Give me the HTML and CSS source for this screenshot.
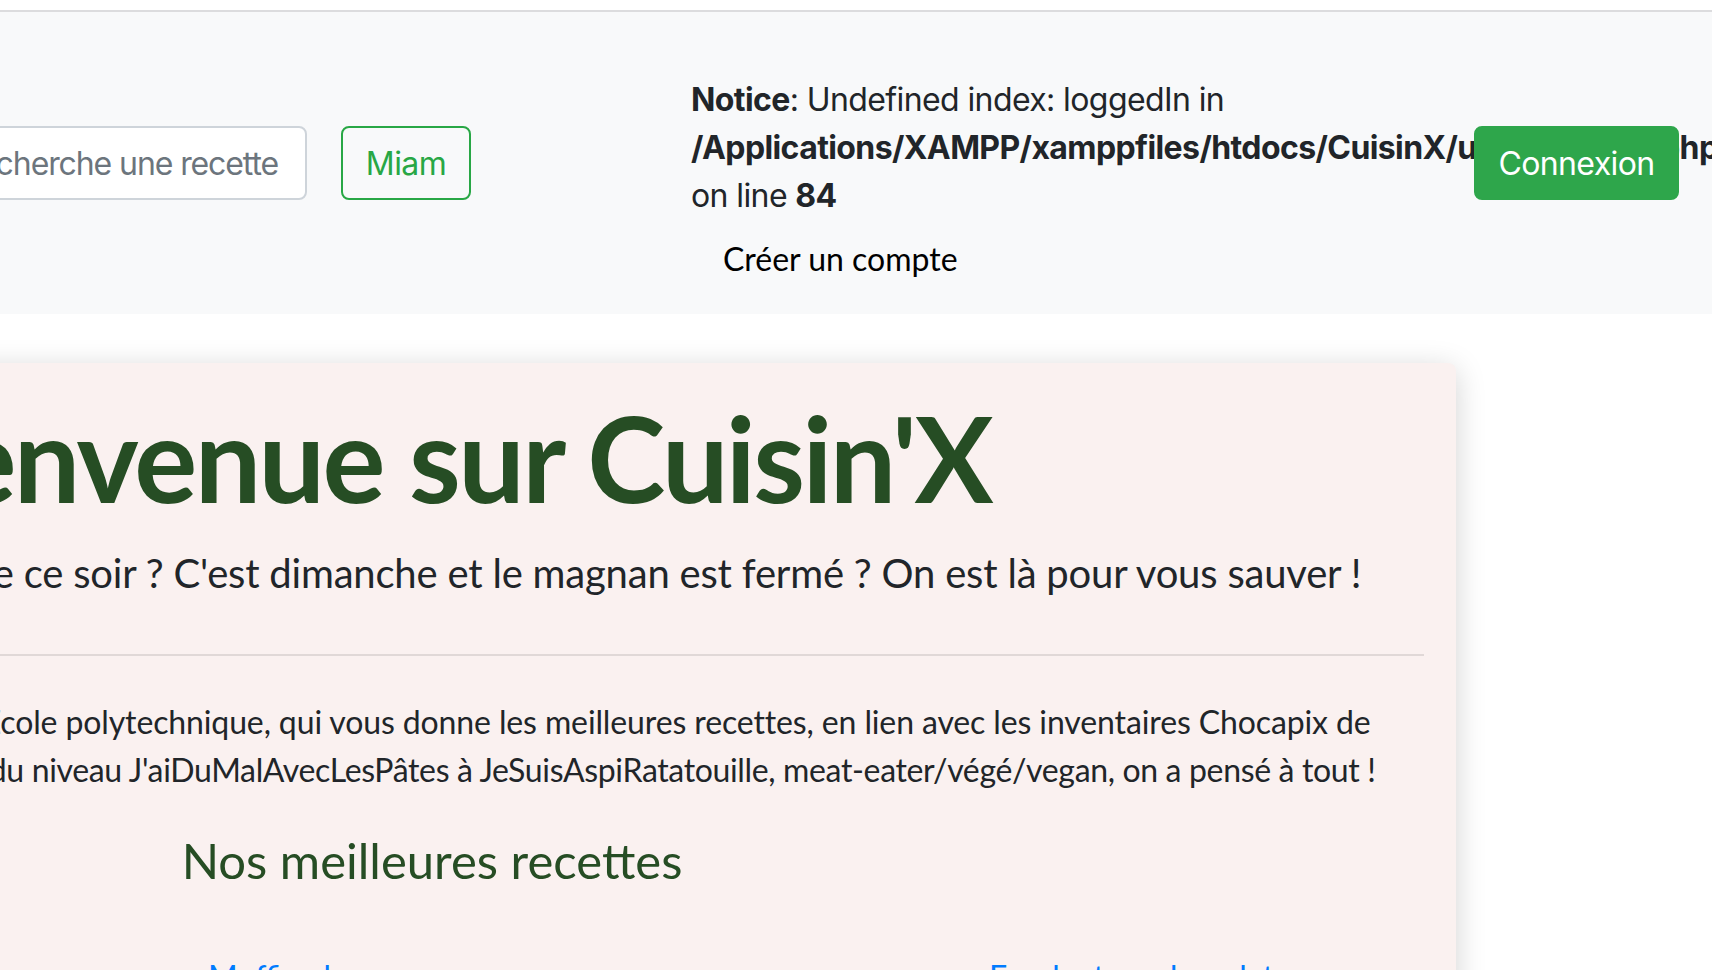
FILE: index.html
```html
<!DOCTYPE html>
<html lang="fr">
<head>
<meta charset="utf-8">
<title>Cuisin'X</title>
<link rel="stylesheet" href="styles.css">
</head>
<body>
<div class="top-gap"></div>
<nav class="navbar">
  <form class="search">
    <input class="search-input" type="text" placeholder="Je cherche une recette">
    <button class="btn-miam" type="button">Miam</button>
  </form>
  <div class="nav-middle">
    <div class="notice"><b>Notice</b>: Undefined index: loggedIn in <b>/Applications/XAMPP/xamppfiles/htdocs/CuisinX/utils/session.php</b> on line <b>84</b></div>
    <a class="nav-link" href="#">Créer un compte</a>
  </div>
  <button class="btn-connexion" type="button">Connexion</button>
</nav>

<main class="jumbotron">
  <h1 class="display">Bienvenue sur Cuisin'X</h1>
  <p class="lead">Qu'est-ce qu'on mange ce soir ? C'est dimanche et le magnan est fermé ? On est là pour vous sauver !</p>
  <hr class="divider">
  <p class="intro"><span class="intro-l1">Cuisin'X est le site de cuisine de l'École polytechnique, qui vous donne les meilleures recettes, en lien avec les inventaires Chocapix de</span><br><span class="intro-l2">l'X. Des recettes de tous les goûts, du niveau J'aiDuMalAvecLesPâtes à JeSuisAspiRatatouille, meat-eater/végé/vegan, on a pensé à tout !</span></p>
  <h2 class="best">Nos meilleures recettes</h2>
  <div class="recipes">
    <a class="recipe" href="#">Crêpes de la Kès</a>
    <a class="recipe" href="#">Muffins banane</a>
    <a class="recipe" href="#">Fondant au chocolat</a>
  </div>
</main>
</body>
</html>
```
FILE: styles.css
```css
html, body {
  margin: 0;
  padding: 0;
  overflow: hidden;
  background: #ffffff;
}
body {
  font-family: "Inter", "Roboto", "Liberation Sans", sans-serif;
  color: #212529;
  font-size: 32px;
  line-height: 48px;
}
.top-gap {
  height: 10px;
  border-bottom: 2px solid #dcdcde;
  background: #ffffff;
}
.navbar {
  display: flex;
  align-items: center;
  background: #f8f9fa;
  padding: 0 33px 0 0;
  letter-spacing: -0.6px;
}
.search {
  display: flex;
  align-items: center;
  margin-left: -73px;
}
.search-input {
  box-sizing: border-box;
  width: 380px;
  height: 74px;
  border: 2px solid #ced4da;
  border-radius: 8px;
  background: #fff;
  padding: 0 10px 0 24px;
  font-family: inherit;
  font-size: 32px;
  letter-spacing: -1.1px;
  color: #495057;
  outline: none;
}
.search-input::placeholder {
  color: #6c757d;
  opacity: 1;
}
.btn-miam {
  box-sizing: border-box;
  margin-left: 34px;
  width: 130px;
  height: 74px;
  border: 2px solid #28a745;
  border-radius: 8px;
  background: transparent;
  color: #28a745;
  font-family: inherit;
  font-size: 32px;
  letter-spacing: -0.6px;
  padding: 0;
}
.nav-middle {
  margin: 64px 0 15px 220px;
  width: 600px;
}
.notice b { font-weight: 700; }
.nav-link {
  display: block;
  padding: 15px 0 16px 32px;
  font-family: "Lato", "Open Sans", sans-serif;
  letter-spacing: 0;
  color: #000;
  text-decoration: none;
}
.btn-connexion {
  box-sizing: border-box;
  margin-left: auto;
  width: 205px;
  height: 74px;
  border: 2px solid #2ea64b;
  border-radius: 8px;
  background: #2ea64b;
  color: #fff;
  font-family: inherit;
  font-size: 32px;
  letter-spacing: -0.6px;
  padding: 0;
}
.jumbotron {
  box-sizing: border-box;
  margin: 49px 0 0 -566px;
  width: 2022px;
  padding: 24px 32px 0;
  background: #faf1f0;
  border-radius: 8px;
  box-shadow: 0 6px 30px rgba(0, 0, 0, 0.18);
  text-align: center;
  font-family: "Lato", "Open Sans", sans-serif;
  height: 700px;
}
.display {
  margin: 0 0 0 -47px;
  font-size: 118px;
  line-height: 1.2;
  font-weight: 700;
  letter-spacing: -2.6px;
  color: #264d24;
}
.lead {
  margin: 15px 0 0 86px;
  font-size: 40px;
  line-height: 58px;
  letter-spacing: -0.2px;
}
.divider {
  margin: 52px 0 0;
  border: 0;
  border-top: 2px solid rgba(0, 0, 0, 0.1);
}
.intro {
  margin: 42px 0 0;
  font-size: 32px;
  line-height: 48px;
}
.intro-l1 {
  letter-spacing: -0.12px;
}
.intro-l2 {
  letter-spacing: -0.35px;
}
.best {
  margin: 36px 26px 0 0;
  font-size: 49px;
  line-height: 60px;
  font-weight: 400;
  color: #264d24;
}
.recipes {
  display: grid;
  grid-template-columns: 742px 781px 1fr;
  margin-top: 63px;
  text-align: left;
}
.recipe {
  color: #007bff;
  text-decoration: none;
  font-size: 32px;
  line-height: 48px;
}
```
